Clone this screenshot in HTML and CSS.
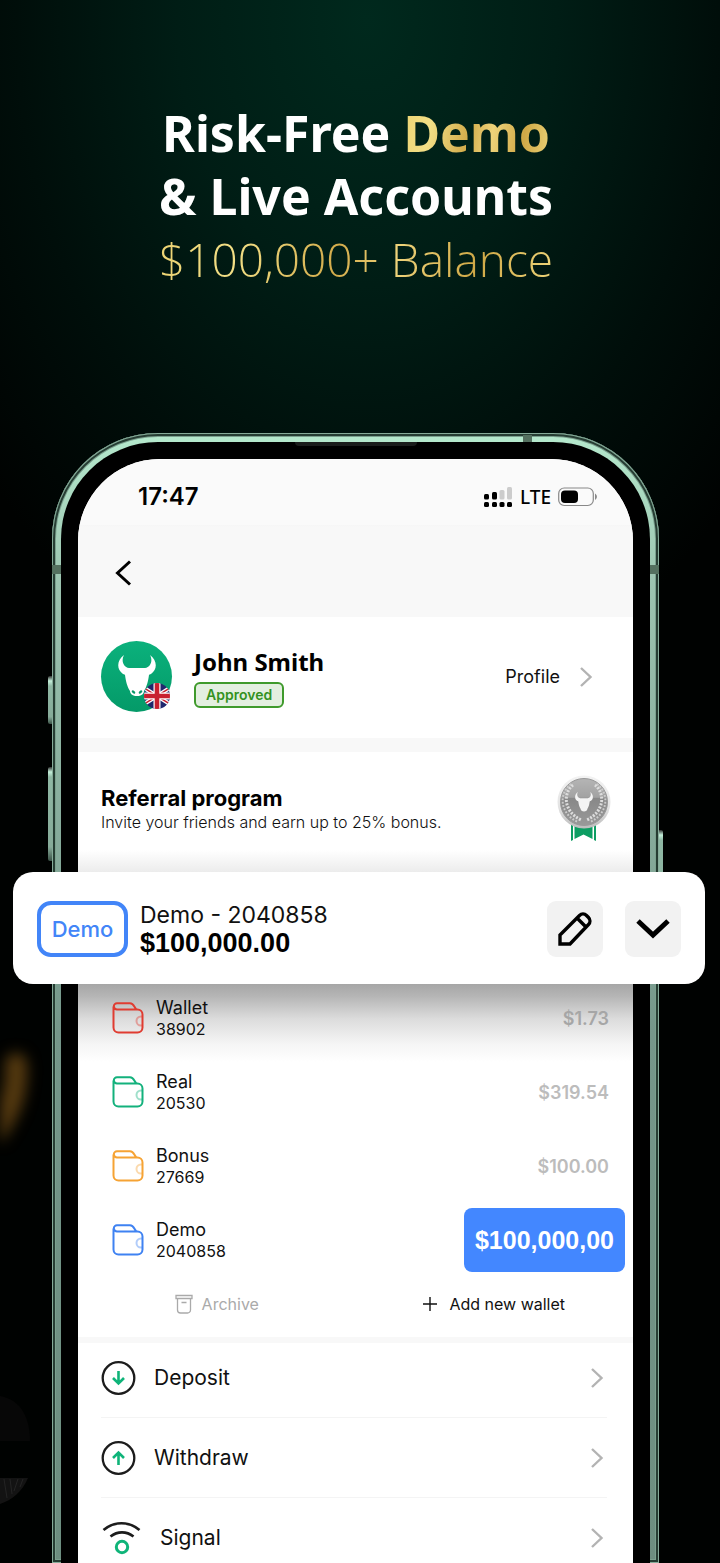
FILE: index.html
```html
<!DOCTYPE html>
<html lang="en">
<head>
  <meta charset="UTF-8" />
  <meta name="viewport" content="width=device-width, initial-scale=1.0"/>
  <title>Demo &amp; Live Accounts</title>
  <link rel="stylesheet" href="styles.css">
</head>
<body>
  <!-- shared shapes -->
  <svg class="defs" width="0" height="0" aria-hidden="true">
    <symbol id="bull" viewBox="0 0 38 42">
      <path d="M6 0C3 5 5 12 11 13h16c6-1 8-8 5-13 7 5 8 14 1 19-1 0-2 1-2 1-1 7-2 11-5 16 0 3-3 5-7 5s-7-2-7-5C9 31 8 27 7 20c0 0-1-1-2-1C-2 14-1 5 6 0z"/>
    </symbol>
    <symbol id="wallet" viewBox="0 0 32 32">
      <path d="M1.500 8v17.500a5 5 0 0 0 5 5h19a5 5 0 0 0 5-5v-13a5 5 0 0 0-5-5H5A3 3 0 0 1 5 1.200h13c4 0 4 4 6.500 6.300M1.500 8V4.500" fill="none" stroke="currentColor" stroke-width="2"/>
      <path d="M30 14.500h-1a4.500 4.500 0 0 0 0 9h1" fill="none" stroke="currentColor" stroke-width="2" opacity=".4"/>
    </symbol>
    <symbol id="chevron" viewBox="0 0 14 22">
      <path d="M2 2l9.500 9L2 20" fill="none" stroke="currentColor" stroke-width="2.400"/>
    </symbol>
  </svg>

  <svg class="smear" viewBox="0 0 40 120" aria-hidden="true"><path d="M16 18c2 30-8 50-22 70" fill="none" stroke="#54390f" stroke-width="22" stroke-linecap="round"/></svg>
  <svg class="shade" viewBox="0 0 32 112" aria-hidden="true">
    <path d="M0 2c18 3 30 18 30 45H0z" fill="#070707"/>
    <path d="M0 84h28C22 98 12 106 0 110z" fill="#131313"/>
    <path d="M4 85l3 19M10 85l2 15M18 85l-4 12M23 85l-3 8" stroke="#242424" fill="none"/>
  </svg>

  <header class="hero">
    <h1>Risk-Free <span class="gold">Demo</span><br>&amp; Live Accounts</h1>
    <p class="gold">$100,000+ Balance</p>
  </header>

  <main class="phone">
    <span class="key key-up"></span>
    <span class="key key-down"></span>
    <span class="key key-power"></span>
    <span class="band band-left"></span>
    <span class="band band-right"></span>
    <span class="band band-top"></span>
    <div class="bezel">
      <span class="speaker"></span>
      <div class="screen">
        <div class="topbar">
          <div class="status">
            <span class="time">17:47</span>
            <span class="network">
              <svg width="29" height="20" viewBox="0 0 29 20" aria-hidden="true">
                <rect x="0" y="7" width="5" height="5.500" rx="1.500"/><rect x="8" y="5" width="5" height="7.500" rx="1.500"/>
                <rect x="15.500" y="3" width="5" height="9.500" rx="1.500" fill="#ccc"/><rect x="23" y="0" width="5" height="12.500" rx="1.500" fill="#ccc"/>
                <rect x="0" y="15" width="5" height="5" rx="1.500"/><rect x="8" y="15" width="5" height="5" rx="1.500"/><rect x="15.500" y="15" width="5" height="5" rx="1.500"/><rect x="23" y="15" width="5" height="5" rx="1.500"/>
              </svg>
              <span class="lte">LTE</span>
              <svg width="40" height="20" viewBox="0 0 40 20" aria-hidden="true">
                <rect x=".7" y="1" width="34.600" height="17.500" rx="5.500" fill="none" stroke="#888" stroke-width="1.200"/>
                <rect x="3" y="3.500" width="17" height="12.500" rx="4"/><path d="M37 6.500c2.500 1.500 2.500 5 0 6.500z" fill="#888"/>
              </svg>
            </span>
          </div>
          <button class="back" aria-label="Back">
            <svg width="18" height="28" viewBox="0 0 18 28"><path d="M16 2.500L3.500 14 16 25.500" fill="none" stroke="#000" stroke-width="3"/></svg>
          </button>
        </div>

        <section class="profile">
          <div class="avatar">
            <svg class="head" width="38" height="42"><use href="#bull"/></svg>
            <svg class="nostrils" width="12" height="6" viewBox="0 0 12 6"><ellipse cx="2.500" cy="3" rx="2" ry="1.300" transform="rotate(35 2.500 3)"/><ellipse cx="9.500" cy="3" rx="2" ry="1.300" transform="rotate(-35 9.500 3)"/></svg>
            <svg class="flag" width="26" height="26" viewBox="0 0 26 26">
              <clipPath id="round"><circle cx="13" cy="13" r="13"/></clipPath>
              <g clip-path="url(#round)">
                <path fill="#20286d" d="M0 0h26v26H0z"/>
                <path d="M-3 3l32 20M29 3L-3 23" stroke="#fff" stroke-width="4"/>
                <path d="M-3 3l32 20M29 3L-3 23" stroke="#c8202f" stroke-width="1.500"/>
                <path d="M13 0v26M0 13h26" stroke="#fff" stroke-width="7"/>
                <path d="M13 0v26M0 13h26" stroke="#c8202f" stroke-width="4.600"/>
              </g>
            </svg>
          </div>
          <div class="who">
            <h2>John Smith</h2>
            <span class="badge">Approved</span>
          </div>
          <a class="profile-link" href="#">Profile <svg class="chevron" width="14" height="22"><use href="#chevron"/></svg></a>
        </section>

        <section class="referral">
          <div>
            <h3>Referral program</h3>
            <p>Invite your friends and earn up to 25% bonus.</p>
          </div>
          <svg width="54" height="68" viewBox="0 0 54 68" aria-hidden="true">
            <defs>
              <linearGradient id="silver" x2="0" y2="1"><stop stop-color="#b5b5b5"/><stop offset=".4" stop-color="#a2a2a2"/><stop offset=".42" stop-color="#888"/><stop offset="1" stop-color="#999"/></linearGradient>
              <linearGradient id="rim" x2="0" y2="1"><stop stop-color="#f3f3f3"/><stop offset=".6" stop-color="#e3e3e3"/><stop offset="1" stop-color="#bbb"/></linearGradient>
            </defs>
            <path d="M14 48h2v17l-2 1zM17.500 48h18v16l-9-4.500-9 4.500zM37 48h2v18l-2-1z" fill="#0c9d62"/>
            <circle cx="27" cy="27" r="26.500" fill="url(#rim)"/>
            <circle cx="27" cy="27" r="23.500" fill="url(#silver)" stroke="#999"/>
            <path d="M16 10C6 18 6 36 24 45M38 10c10 8 10 26-8 35" fill="none" stroke="#ddd" stroke-width="3" stroke-dasharray="2 1.400"/>
            <path d="M14 9C1 19 3 39 21 47M40 9c13 10 11 30-7 38" fill="none" stroke="#ccc" stroke-width="2" stroke-dasharray="1.800 1.600"/>
            <use href="#bull" x="18" y="17" width="18" height="20" fill="#f4f4f4"/>
          </svg>
        </section>

        <section class="account">
          <span class="tag">Demo</span>
          <div class="account-info">
            <p>Demo - 2040858</p>
            <strong>$100,000.00</strong>
          </div>
          <button class="tool" aria-label="Edit">
            <svg width="36" height="36" viewBox="0 0 36 36"><path d="M3 24L22.500 4.500a5 5 0 0 1 7 0l2 2a5 5 0 0 1 0 7L13 33H3zM20 7l9 9" fill="none" stroke="#000" stroke-width="3.400"/></svg>
          </button>
          <button class="tool" aria-label="Expand">
            <svg width="34" height="22" viewBox="0 0 34 22"><path d="M2 3l15 14L32 3" fill="none" stroke="#000" stroke-width="5"/></svg>
          </button>
        </section>

        <section class="wallets">
          <div class="wallet">
            <svg class="red" width="32" height="32"><use href="#wallet"/></svg>
            <div><h4>Wallet</h4><p>38902</p></div>
            <span class="amount">$1.73</span>
          </div>
          <div class="wallet">
            <svg class="green" width="32" height="32"><use href="#wallet"/></svg>
            <div><h4>Real</h4><p>20530</p></div>
            <span class="amount">$319.54</span>
          </div>
          <div class="wallet">
            <svg class="orange" width="32" height="32"><use href="#wallet"/></svg>
            <div><h4>Bonus</h4><p>27669</p></div>
            <span class="amount">$100.00</span>
          </div>
          <div class="wallet">
            <svg class="blue" width="32" height="32"><use href="#wallet"/></svg>
            <div><h4>Demo</h4><p>2040858</p></div>
            <span class="amount selected">$100,000,00</span>
          </div>
          <div class="actions">
            <button class="archive">
              <svg width="18" height="20" viewBox="0 0 18 20"><path d="M1 1.500h16v3H1zM2.500 5v11a3 3 0 0 0 3 3h7a3 3 0 0 0 3-3V5M6.500 8.500h5" fill="none" stroke="#aaa" stroke-width="1.300"/></svg>
              Archive
            </button>
            <button class="add">
              <svg width="14" height="14" viewBox="0 0 14 14"><path d="M7 0v14M0 7h14" stroke="#111" stroke-width="1.400"/></svg>
              Add new wallet
            </button>
          </div>
        </section>

        <nav class="menu">
          <a href="#">
            <svg width="35" height="34" viewBox="0 0 35 34"><circle cx="17.500" cy="17" r="15.800" fill="none" stroke="#1c1c1c" stroke-width="2.300"/><path d="M17.500 10v12M12 17l5.500 5.500L23 17" fill="none" stroke="#0fb479" stroke-width="2.600"/></svg>
            Deposit
            <svg class="chevron" width="14" height="22"><use href="#chevron"/></svg>
          </a>
          <a href="#">
            <svg width="35" height="34" viewBox="0 0 35 34"><circle cx="17.500" cy="17" r="15.800" fill="none" stroke="#1c1c1c" stroke-width="2.300"/><path d="M17.500 24V12M12 17l5.500-5.500L23 17" fill="none" stroke="#0fb479" stroke-width="2.600"/></svg>
            Withdraw
            <svg class="chevron" width="14" height="22"><use href="#chevron"/></svg>
          </a>
          <a href="#">
            <svg width="41" height="34" viewBox="0 0 41 34"><path d="M2.500 9c11-9 25-9 36 0M9.500 15.500c7-5.500 16-5.500 23 0" fill="none" stroke="#1c1c1c" stroke-width="2.700"/><circle cx="21" cy="26" r="5.700" fill="none" stroke="#0fb479" stroke-width="3"/></svg>
            Signal
            <svg class="chevron" width="14" height="22"><use href="#chevron"/></svg>
          </a>
        </nav>
      </div>
    </div>
  </main>
</body>
</html>
```

FILE: styles.css
```css
* {
  margin: 0;
  padding: 0;
  box-sizing: border-box;
}

body {
  position: relative;
  min-height: 100vh;
  background: #000 radial-gradient(ellipse 500px 700px at 51% 20px, #00291d, #001d15 38%, #000e0a 70%, #000201 100%) no-repeat;
  font-family: Inter, sans-serif;
  color: #111;
  overflow-x: hidden;
}

button {
  border: none;
  background: none;
  font: inherit;
  color: inherit;
  cursor: pointer;
}

a {
  color: inherit;
  text-decoration: none;
}

svg {
  display: block;
  flex: none;
}

.defs {
  position: absolute;
}

.smear {
  position: absolute;
  left: 0;
  top: 1046px;
  width: 40px;
  filter: blur(7px);
}

.shade {
  position: absolute;
  left: 0;
  top: 1394px;
  width: 32px;
}

/* Headline */
.hero {
  height: 433px;
  padding: 102px 8px 0 0;
  text-align: center;
  font-family: "Noto Sans", sans-serif;
  line-height: 63px;
  color: #fff;
}

.hero h1 {
  font-size: 50px;
  font-weight: 700;
  line-height: 63px;
}

.hero p {
  font-family: "Open Sans", sans-serif;
  font-size: 46px;
  font-weight: 300;
}

.gold {
  background: linear-gradient(100deg, #ecd372, #f2df86 20%, #d3ac4b 45%, #eed37a 60%, #cfa846 80%, #eed57a);
  -webkit-background-clip: text;
  background-clip: text;
  color: transparent;
}

.hero p.gold {
  width: fit-content;
  margin: 0 auto;
}

/* Phone */
.phone {
  position: relative;
  margin: 0 61px 0 52px;
  padding: 9px 9px 0;
  border-radius: 106px 106px 0 0;
  background: linear-gradient(#b5e9cd, #9cc4b0 150px, #75978a 600px, #6d8e80);
  box-shadow: inset 0 0 0 1px #86ab99, inset 0 0 0 3px #263d33, inset 0 0 0 4px #7ba08e;
}

.bezel {
  position: relative;
  padding: 17px 17px 0;
  border-radius: 97px 97px 0 0;
  background: #000;
}

.speaker {
  position: absolute;
  top: 0;
  left: 50%;
  width: 122px;
  height: 4px;
  margin-left: -61px;
  border-radius: 0 0 4px 4px;
  background: #1a1c1b;
}

.key {
  position: absolute;
  left: -4px;
  width: 4px;
  border-radius: 2px 0 0 2px;
  background: linear-gradient(#333, #c4f0da 5px, #8fb8a4 10px, #86ab99 85%, #3c5348);
}

.key-up {
  top: 243px;
  height: 48px;
}

.key-down {
  top: 334px;
  height: 94px;
}

.key-power {
  left: auto;
  right: -4px;
  top: 397px;
  height: 150px;
  border-radius: 0 2px 2px 0;
}

.band {
  position: absolute;
  width: 9px;
  height: 9px;
  background: #54705f;
}

.band-left {
  left: 0;
  top: 132px;
}

.band-right {
  right: 0;
  top: 132px;
}

.band-top {
  right: 127px;
  top: 2px;
  height: 7px;
}

.screen {
  border-radius: 82px 82px 0 0;
  background: #fff;
}

.topbar {
  height: 158px;
  border-radius: 82px 82px 0 0;
  background: linear-gradient(#fafafa 66px, #f6f6f6 66px, #f8f8f8 68px);
}

.status {
  display: flex;
  align-items: center;
  justify-content: space-between;
  height: 75px;
  padding: 0 35px 0 60px;
}

.time {
  font-size: 24px;
  font-weight: 600;
  color: #000;
}

.network {
  display: flex;
  align-items: center;
  gap: 7px;
}

.lte {
  font-family: "Noto Sans", sans-serif;
  font-size: 19px;
  font-weight: 500;
  color: #000;
}

.back {
  display: block;
  margin: 25px 0 0 36px;
}

.profile {
  display: flex;
  align-items: center;
  padding: 24px 40px 26px 23px;
  border-bottom: 14px solid #f8f8f8;
}

.avatar {
  position: relative;
  display: flex;
  justify-content: center;
  width: 71px;
  height: 71px;
  padding-top: 14px;
  border-radius: 50%;
  background: linear-gradient(#0bb17c, #049a68);
}

.head {
  fill: #fff;
}

.nostrils {
  position: absolute;
  left: 30px;
  top: 48px;
  fill: #08996a;
}

.flag {
  position: absolute;
  right: 2px;
  bottom: 3px;
}

.who {
  margin-left: 22px;
}

.who h2 {
  font-family: "Noto Sans", sans-serif;
  font-size: 24px;
  line-height: 32px;
  color: #000;
}

.badge {
  display: block;
  width: fit-content;
  margin-top: 4px;
  padding: 0 10px;
  border: 2px solid #3f9a2c;
  border-radius: 6px;
  background: #e3efe0;
  font-size: 14px;
  font-weight: 600;
  line-height: 22px;
  color: #34921f;
}

.profile-link {
  display: flex;
  align-items: center;
  gap: 19px;
  margin-left: auto;
  font-size: 18px;
}

.chevron {
  color: #b3b3b3;
}

.referral {
  display: flex;
  align-items: flex-start;
  justify-content: space-between;
  height: 120px;
  padding: 23px 22px 0 23px;
  background: linear-gradient(#fff 98px, #ececec);
}

.referral h3 {
  margin-top: 10px;
  font-size: 22px;
  font-weight: 700;
  line-height: 26px;
  color: #000;
}

.referral p {
  font-size: 16px;
  font-weight: 300;
  line-height: 22px;
}

/* Selected account, wider than the phone */
.account {
  position: relative;
  display: flex;
  align-items: center;
  height: 112px;
  margin: 0 -72px 0 -65px;
  padding: 2px 24px 0;
  border-radius: 20px;
  background: #fff;
}

.tag {
  width: 91px;
  border: 4px solid #4285f8;
  border-radius: 14px;
  font-size: 22px;
  font-weight: 500;
  line-height: 48px;
  text-align: center;
  color: #4285f8;
}

.account-info {
  flex: 1;
  margin-left: 12px;
}

.account-info p {
  font-size: 23px;
  line-height: 28px;
}

.account-info strong {
  display: block;
  font-family: "Liberation Sans", sans-serif;
  font-size: 27px;
  line-height: 28px;
  color: #000;
}

.tool {
  display: flex;
  align-items: center;
  justify-content: center;
  width: 56px;
  height: 56px;
  margin-left: 22px;
  border-radius: 9px;
  background: #f2f2f2;
}

.wallets {
  display: flex;
  flex-direction: column;
  gap: 30px;
  margin-top: -20px;
  padding: 32px 24px 21px 34px;
  border-bottom: 6px solid #f8f8f8;
  background: linear-gradient(#a6a6a6 20px, #b5b5b5 32px, #dcdcdc 55px, #f5f5f5 80px, #fff 98px);
}

.wallet {
  display: flex;
  align-items: center;
  gap: 12px;
  height: 44px;
}

.wallet h4 {
  font-size: 18px;
  font-weight: 400;
  line-height: 23px;
}

.wallet p {
  font-size: 16px;
  line-height: 21px;
}

.amount {
  margin-left: auto;
  font-size: 18px;
  font-weight: 600;
  color: #bcbcbc;
}

.wallet:first-child .amount {
  color: #a6a6a6;
}

.amount.selected {
  margin: -10px -16px -10px auto;
  padding: 0 11px;
  border-radius: 8px;
  background: #4387ff;
  font-family: "Liberation Sans", sans-serif;
  font-size: 25px;
  font-weight: 700;
  line-height: 64px;
  color: #fff;
}

.red { color: #e03c31; }
.green { color: #13b17c; }
.orange { color: #f6a334; }
.blue { color: #3f82f2; }

.actions {
  display: grid;
  grid-template-columns: 1fr 1fr;
  justify-items: center;
  height: 24px;
  margin: 0 -24px 0 -34px;
  font-size: 16px;
}

.actions button {
  display: flex;
  align-items: center;
}

.archive {
  gap: 9px;
  color: #aaa;
}

.add {
  gap: 12px;
}

.menu {
  padding: 0 26px 0 23px;
}

.menu a {
  display: flex;
  align-items: center;
  gap: 18px;
  padding: 23px 0 22px;
  border-bottom: 1px solid #f4f4f4;
  font-size: 21px;
  line-height: 34px;
}

.menu a:first-child {
  padding-top: 18px;
}

.menu a:last-child {
  padding-bottom: 8px;
  border: none;
}

.menu .chevron {
  margin: 0 3px 0 auto;
}
```
